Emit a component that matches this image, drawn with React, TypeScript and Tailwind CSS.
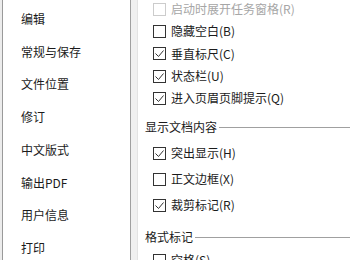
const navItems = ["编辑", "常规与保存", "文件位置", "修订", "中文版式", "输出PDF", "用户信息", "打印"];

const viewRows = [
  { label: "启动时展开任务窗格(R)", checked: false, disabled: true },
  { label: "隐藏空白(B)", checked: false },
  { label: "垂直标尺(C)", checked: true },
  { label: "状态栏(U)", checked: true },
  { label: "进入页眉页脚提示(Q)", checked: true },
];

const docRows = [
  { label: "突出显示(H)", checked: true },
  { label: "正文边框(X)", checked: false },
  { label: "裁剪标记(R)", checked: true },
];

function CheckBox({ checked, disabled }: { checked: boolean; disabled?: boolean }) {
  return (
    <div
      className={`w-[13px] h-[13px] border flex items-center justify-center shrink-0 ${
        disabled ? "border-[#cccccc]" : "border-[#333333]"
      }`}
    >
      {checked && (
        <svg width="11" height="11" viewBox="0 0 11 11" fill="none">
          <polyline points="1.5,5.5 4.5,8.5 9.5,2.5" stroke="#333333" strokeWidth="1" />
        </svg>
      )}
    </div>
  );
}

function Row({
  label,
  checked,
  disabled,
  h,
}: {
  label: string;
  checked: boolean;
  disabled?: boolean;
  h: string;
}) {
  return (
    <div className={`flex items-center gap-[5px] pl-[15px] shrink-0 ${h}`}>
      <CheckBox checked={checked} disabled={disabled} />
      <span className={disabled ? "text-[#a6a6a6]" : "text-[#1b1b1b]"}>{label}</span>
    </div>
  );
}

function SectionHeader({ title, className }: { title: string; className: string }) {
  return (
    <div className={`flex items-center h-[20px] pl-[7px] shrink-0 ${className}`}>
      <span className="text-[#1b1b1b]">{title}</span>
      <div className="flex-1 h-px bg-[#a0a0a0] ml-[2px]" />
    </div>
  );
}

export default function App() {
  return (
    <div
      className="w-[350px] h-[260px] overflow-hidden flex bg-white text-[12px] leading-none"
      style={{ fontFamily: '"Noto Sans CJK SC", "Noto Sans", sans-serif' }}
    >
      {/* Left nav */}
      <div className="w-[2px] bg-[#ececec]" />
      <div className="w-[128px] border-l border-[#9a9a9a] flex flex-col pt-[2.5px]">
        {navItems.map((item) => (
          <div key={item} className="h-[32.75px] shrink-0 flex items-center pl-[18px] text-[#1b1b1b]">
            {item}
          </div>
        ))}
      </div>

      {/* Divider */}
      <div className="w-[8px] bg-[#f0f0f0] border-l border-[#a0a0a0] border-r border-r-[#e3e3e3]" />

      {/* Right content */}
      <div className="flex-1 flex flex-col">
        <div className="flex flex-col shrink-0 mt-[-2px]">
          {viewRows.map((r) => (
            <Row key={r.label} {...r} h="h-[22.3px]" />
          ))}
        </div>

        <SectionHeader title="显示文档内容" className="mt-[7.7px]" />
        <div className="flex flex-col shrink-0 mt-[3px]">
          {docRows.map((r) => (
            <Row key={r.label} {...r} h="h-[26px]" />
          ))}
        </div>

        <SectionHeader title="格式标记" className="mt-[9px]" />
        <Row label="空格(S)" checked={false} h="h-[26px]" />
      </div>
    </div>
  );
}
